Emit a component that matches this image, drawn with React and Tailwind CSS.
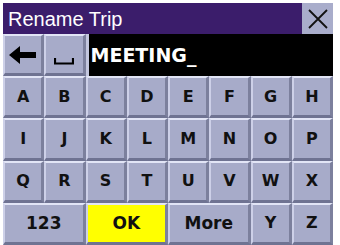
import React from "react";

function Key({ children, className = "" }) {
  return (
    <div className={"flex items-center justify-center border-t-[2px] border-l-[2px] border-b-[3px] border-r-[3px] border-t-[#e2e5f6] border-l-[#cdd0e8] border-b-[#6f7392] border-r-[#7c809d] text-[#111] font-bold font-['DejaVu_Sans',sans-serif] " + (className.includes("bg-") ? "" : "bg-[#a7abc9] ") + className}>
      {children}
    </div>
  );
}

export default function App() {
  const rows = [
    ["A", "B", "C", "D", "E", "F", "G", "H"],
    ["I", "J", "K", "L", "M", "N", "O", "P"],
    ["Q", "R", "S", "T", "U", "V", "W", "X"],
  ];
  return (
    <div className="w-[340px] h-[245px] bg-white pt-[3px] pl-[3px] pr-[7px] flex flex-col font-['Liberation_Sans',Arial,sans-serif]">
      <div className="h-[31px] flex bg-[#3b1d6b] shrink-0">
        <div className="flex-1 text-white text-[20px] pl-[5px] leading-[33px]">Rename Trip</div>
        <div className="w-[31px] bg-[#a9adcb] flex items-center justify-center">
          <svg width="22" height="22" viewBox="0 0 22 22">
            <path d="M2 2 L20 20 M20 2 L2 20" stroke="#111" strokeWidth="1.8" />
          </svg>
        </div>
      </div>
      <div className="flex-1 grid grid-cols-8 grid-rows-5 bg-[#c3c6de]">
        <Key>
          <svg width="28" height="18" viewBox="0 0 28 18">
            <path d="M0 9 L11 0 L11 6 L27 6 L27 12 L11 12 L11 18 Z" fill="#000" />
          </svg>
        </Key>
        <Key>
          <svg width="20" height="8" viewBox="0 0 20 8" className="mt-[12px]">
            <path d="M1 1 L1 6.5 L19 6.5 L19 1" stroke="#000" strokeWidth="2.2" fill="none" />
          </svg>
        </Key>
        <div className="col-span-6 ml-[3px] bg-black text-white font-bold font-['DejaVu_Sans',sans-serif] text-[19px] flex items-center pl-[2px]">
          MEETING_
        </div>
        {rows.flat().map((k) => (
          <Key key={k} className="text-[16px]">{k}</Key>
        ))}
        <Key className="col-span-2 text-[17px]">123</Key>
        <Key className="col-span-2 bg-[#ffff00] text-[17px]">OK</Key>
        <Key className="col-span-2 text-[17px]">More</Key>
        <Key className="text-[16px]">Y</Key>
        <Key className="text-[16px]">Z</Key>
      </div>
    </div>
  );
}
